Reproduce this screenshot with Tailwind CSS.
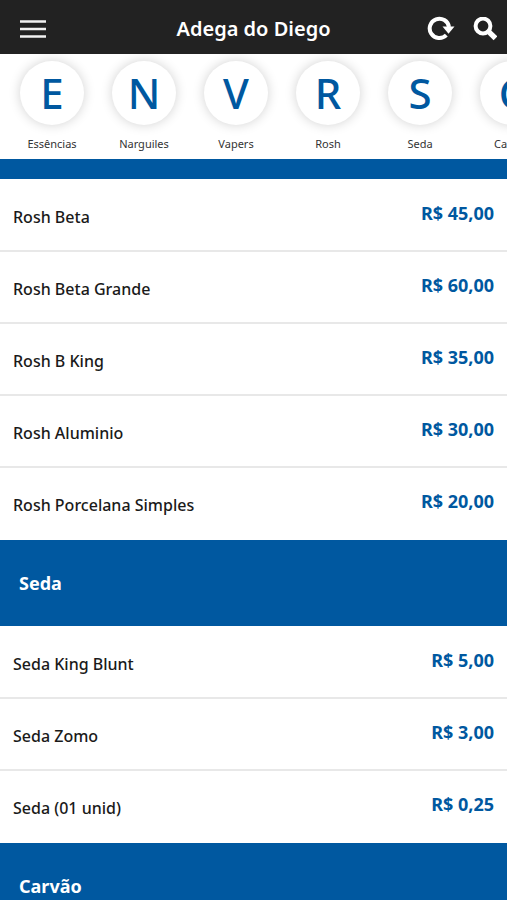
<!DOCTYPE html>
<html lang="pt-BR">
<head>
<meta charset="utf-8">
<meta name="viewport" content="width=device-width, initial-scale=1">
<title>Adega do Diego</title>
<script src="https://cdn.jsdelivr.net/npm/@tailwindcss/browser@4"></script>
</head>
<body class="flex h-screen flex-col overflow-hidden bg-white font-['Noto_Sans','Open_Sans',sans-serif] text-[#1a1a1a]">
<header class="flex h-[54px] shrink-0 items-center bg-[#222222] px-2.5 pt-1 text-white">
  <div class="flex flex-1"><button type="button" aria-label="Menu" class="ml-2.5 block"><svg class="h-[18px] w-[26px]" viewBox="0 0 26 18" fill="none" stroke="#f2f2f2" stroke-width="2.4"><path d="M0 1.5h26M0 9h26M0 16.5h26"/></svg></button></div>
  <h1 class="text-xl font-semibold whitespace-nowrap">Adega do Diego</h1>
  <div class="flex flex-1 items-center justify-end gap-[18px]">
    <button type="button" aria-label="Atualizar"><svg class="block size-7" viewBox="0 0 28 28"><path d="M19.3 20.2A9.7 9.7 0 1 1 22 12" fill="none" stroke="#fff" stroke-width="4"/><path d="M15.5 11.5h12l-6 7.2z" fill="#fff"/></svg></button>
    <button type="button" aria-label="Buscar"><svg class="block size-6" viewBox="0 0 24 24" fill="none" stroke="#fff"><circle cx="10" cy="9" r="7.4" stroke-width="4"/><path d="M15.1 14.1l7.4 7.2" stroke-width="5.4"/></svg></button>
  </div>
</header>
<nav aria-label="Categorias" class="flex h-[105px] shrink-0 overflow-hidden pt-[7px] pl-1.5 text-[11px] leading-4 text-[#333333]">
  <a href="#essencias" class="flex w-[92px] shrink-0 flex-col items-center gap-[11px]"><span class="flex size-16 items-center justify-center rounded-full bg-white text-[42px] leading-none font-medium text-[#0058a0] shadow-[0_0_12px_rgba(0,0,0,0.18)]">E</span>Essências</a>
  <a href="#narguiles" class="flex w-[92px] shrink-0 flex-col items-center gap-[11px]"><span class="flex size-16 items-center justify-center rounded-full bg-white text-[42px] leading-none font-medium text-[#0058a0] shadow-[0_0_12px_rgba(0,0,0,0.18)]">N</span>Narguiles</a>
  <a href="#vapers" class="flex w-[92px] shrink-0 flex-col items-center gap-[11px]"><span class="flex size-16 items-center justify-center rounded-full bg-white text-[42px] leading-none font-medium text-[#0058a0] shadow-[0_0_12px_rgba(0,0,0,0.18)]">V</span>Vapers</a>
  <a href="#rosh" class="flex w-[92px] shrink-0 flex-col items-center gap-[11px]"><span class="flex size-16 items-center justify-center rounded-full bg-white text-[42px] leading-none font-medium text-[#0058a0] shadow-[0_0_12px_rgba(0,0,0,0.18)]">R</span>Rosh</a>
  <a href="#seda" class="flex w-[92px] shrink-0 flex-col items-center gap-[11px]"><span class="flex size-16 items-center justify-center rounded-full bg-white text-[42px] leading-none font-medium text-[#0058a0] shadow-[0_0_12px_rgba(0,0,0,0.18)]">S</span>Seda</a>
  <a href="#carvao" class="flex w-[92px] shrink-0 flex-col items-center gap-[11px]"><span class="flex size-16 items-center justify-center rounded-full bg-white text-[42px] leading-none font-medium text-[#0058a0] shadow-[0_0_12px_rgba(0,0,0,0.18)]">C</span>Carvão</a>
</nav>
<main class="min-h-0 flex-1 overflow-hidden">
  <section id="rosh">
    <div class="h-5 bg-[#0058a0]"></div>
    <ul class="divide-y-2 divide-[#e8e8e8] pt-px">
      <li class="flex h-[72px] justify-between px-[13px] pt-[21px] leading-6"><span class="pt-1 font-medium">Rosh Beta</span><span class="text-lg leading-6 font-bold text-[#0058a0]">R$ 45,00</span></li>
      <li class="flex h-[72px] justify-between px-[13px] pt-[21px] leading-6"><span class="pt-1 font-medium">Rosh Beta Grande</span><span class="text-lg leading-6 font-bold text-[#0058a0]">R$ 60,00</span></li>
      <li class="flex h-[72px] justify-between px-[13px] pt-[21px] leading-6"><span class="pt-1 font-medium">Rosh B King</span><span class="text-lg leading-6 font-bold text-[#0058a0]">R$ 35,00</span></li>
      <li class="flex h-[72px] justify-between px-[13px] pt-[21px] leading-6"><span class="pt-1 font-medium">Rosh Aluminio</span><span class="text-lg leading-6 font-bold text-[#0058a0]">R$ 30,00</span></li>
      <li class="flex h-[72px] justify-between px-[13px] pt-[21px] leading-6"><span class="pt-1 font-medium">Rosh Porcelana Simples</span><span class="text-lg leading-6 font-bold text-[#0058a0]">R$ 20,00</span></li>
    </ul>
  </section>
  <section id="seda">
    <h2 class="flex h-[86px] items-center bg-[#0058a0] px-[19px] text-lg font-bold text-white">Seda</h2>
    <ul class="divide-y-2 divide-[#e8e8e8] pt-px">
      <li class="flex h-[72px] justify-between px-[13px] pt-[21px] leading-6"><span class="pt-1 font-medium">Seda King Blunt</span><span class="text-lg leading-6 font-bold text-[#0058a0]">R$ 5,00</span></li>
      <li class="flex h-[72px] justify-between px-[13px] pt-[21px] leading-6"><span class="pt-1 font-medium">Seda Zomo</span><span class="text-lg leading-6 font-bold text-[#0058a0]">R$ 3,00</span></li>
      <li class="flex h-[72px] justify-between px-[13px] pt-[21px] leading-6"><span class="pt-1 font-medium">Seda (01 unid)</span><span class="text-lg leading-6 font-bold text-[#0058a0]">R$ 0,25</span></li>
    </ul>
  </section>
  <section id="carvao">
    <h2 class="flex h-[86px] items-center bg-[#0058a0] px-[19px] text-lg font-bold text-white">Carvão</h2>
  </section>
</main>
</body>
</html>
